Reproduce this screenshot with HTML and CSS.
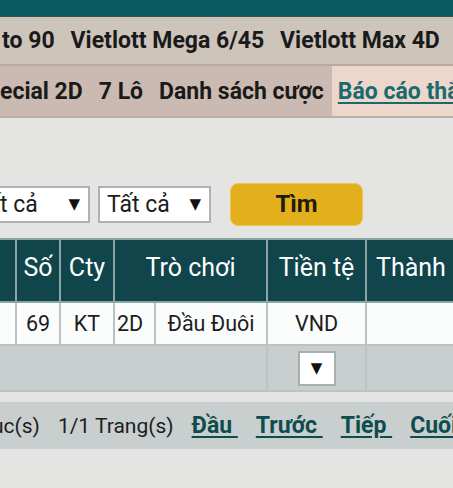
FILE: index.html
```
<!DOCTYPE html>
<html lang="vi">
<head>
<meta charset="utf-8">
<link rel="stylesheet" href="styles.css">
</head>
<body>
<div class="topbar"></div>
<nav class="menu menu-games">
  <span class="item first">to 90</span>
  <span class="item">Vietlott Mega 6/45</span>
  <span class="item">Vietlott Max 4D</span>
  <span class="item">Vietlott Power 6/55</span>
</nav>
<nav class="menu menu-sub">
  <span class="item first">ecial 2D</span>
  <span class="item">7 Lô</span>
  <span class="item">Danh sách cược</span>
  <span class="item active"><a href="#">Báo cáo thắng thua</a></span>
</nav>
<section class="filters">
  <div class="select select-wide"><span class="sel-text">Tất cả</span><span class="arrow">▼</span></div>
  <div class="select"><span class="sel-text">Tất cả</span><span class="arrow">▼</span></div>
  <button class="btn-find">Tìm</button>
</section>
<table class="grid">
  <colgroup>
    <col class="c0"><col class="c1"><col class="c2"><col class="c3"><col class="c4"><col class="c5"><col class="c6">
  </colgroup>
  <thead>
    <tr>
      <th></th><th>Số</th><th>Cty</th><th colspan="2">Trò chơi</th><th>Tiền tệ</th><th class="th-left">Thành</th>
    </tr>
  </thead>
  <tbody>
    <tr class="data">
      <td></td><td>69</td><td>KT</td><td class="left">2D</td><td>Đầu Đuôi</td><td>VND</td><td></td>
    </tr>
    <tr class="foot">
      <td colspan="5"></td><td><div class="mini-select"><span class="arrow">▼</span></div></td><td></td>
    </tr>
  </tbody>
</table>
<div class="pager">
  <span class="count">uc(s)</span>
  <span>1/1 Trang(s)</span>
  <a href="#">Đầu </a>
  <a href="#">Trước </a>
  <a href="#">Tiếp </a>
  <a href="#">Cuối </a>
</div>
</body>
</html>
```
FILE: styles.css
```
html, body {
  margin: 0;
  padding: 0;
  overflow: hidden;
}
body {
  background: #e4e5e3;
  font-family: Roboto, "Noto Sans", sans-serif;
  color: #1d1d1d;
  width: 453px;
  height: 488px;
}
.topbar {
  height: 16px;
  background: #0a5a62;
  border-bottom: 1px solid #3d4f50;
}
.menu {
  display: flex;
  white-space: nowrap;
  font-weight: bold;
  font-size: 23px;
  color: #1a1a1a;
}
.menu .item {
  display: flex;
  align-items: center;
  padding: 0 8px;
  flex: none;
}
.menu-games {
  height: 47px;
  background: #cdc4ba;
  border-bottom: 2px solid #b8ab9d;
}
.menu-games .first { padding-left: 2px; }
.menu-sub {
  height: 50px;
  background: #cbbab1;
  border-bottom: 2px solid #bcb0a4;
}
.menu-sub .first { padding-left: 0; }
.menu-sub .active {
  background: #edd6cc;
  padding-left: 6px;
}
.menu-sub .active a {
  color: #1b6b6d;
  text-decoration: underline;
  text-underline-offset: 3px;
}
.filters {
  display: flex;
  align-items: center;
  padding-top: 65px;
  height: 42px;
}
.select {
  box-sizing: border-box;
  width: 113px;
  height: 37px;
  background: #fff;
  border: 2px solid #b0b0b0;
  display: flex;
  align-items: center;
  justify-content: space-between;
  padding: 0 8px 0 7px;
  font-size: 23px;
  color: #1c1c1c;
  margin-left: 8px;
  flex: none;
}
.select-wide {
  width: 124px;
  margin-left: -34px;
}
.arrow {
  font-family: "DejaVu Sans", sans-serif;
  font-size: 15px;
  color: #111;
}
.btn-find {
  box-sizing: border-box;
  width: 133px;
  height: 43px;
  margin-left: 19px;
  background: #e3af1c;
  border: 1px solid #edc658;
  border-radius: 8px;
  font-family: Roboto, sans-serif;
  font-weight: bold;
  font-size: 24px;
  color: #211b0c;
  flex: none;
}
.grid {
  margin-top: 13px;
  margin-left: -40px;
  border-collapse: collapse;
  table-layout: fixed;
  width: 542px;
  font-size: 21.5px;
  border-top: 2px solid #c8cdcc;
}
.c0 { width: 55px; }
.c1 { width: 44px; }
.c2 { width: 54px; }
.c3 { width: 41px; }
.c4 { width: 112px; }
.c5 { width: 99px; }
.c6 { width: 137px; }
.grid th, .grid td {
  border: 2px solid #b4bebe;
  padding: 0;
  text-align: center;
  white-space: nowrap;
  overflow: hidden;
}
.grid th {
  background: #0f454b;
  color: #fff;
  font-weight: normal;
  font-size: 25px;
  height: 55px;
  border-color: #8ea3a4;
  vertical-align: middle;
  padding-bottom: 6px;
}
.grid th.th-left {
  text-align: left;
  padding-left: 9px;
}
.grid .data td {
  background: #fbfcfc;
  height: 41px;
  color: #1d1d1d;
  border-color: #b9c3c3;
}
.grid .data td.left {
  text-align: left;
  padding-left: 2px;
}
.grid .foot td {
  background: #c9cfcf;
  height: 44px;
  border-color: #bcc4c4;
}
.mini-select {
  box-sizing: border-box;
  width: 38px;
  height: 35px;
  margin: 0 auto;
  background: #fff;
  border: 2px solid #a9aeae;
  display: flex;
  align-items: center;
  justify-content: center;
}
.pager {
  margin-top: 10px;
  height: 47px;
  background: #c9cfcf;
  display: flex;
  align-items: center;
  gap: 18px;
  margin-left: -8px;
  padding-left: 0;
  font-size: 21px;
  white-space: nowrap;
  color: #1d1d1d;
}
.pager a {
  color: #0e4c4d;
  font-weight: bold;
  font-size: 23px;
  text-decoration: underline;
  white-space: pre;
  text-underline-offset: 3px;
}
```
